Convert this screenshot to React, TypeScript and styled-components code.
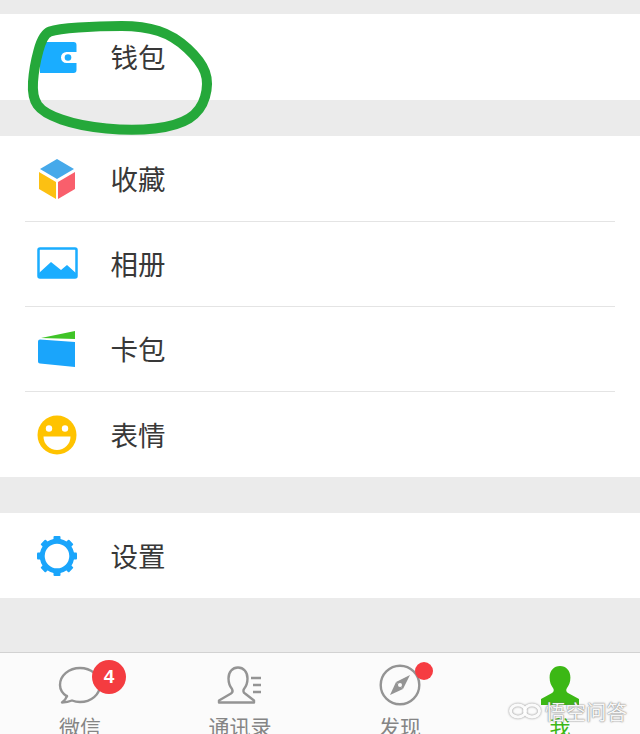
import React from "react";
import styled, { createGlobalStyle } from "styled-components";

const Global = createGlobalStyle`
  html, body { margin: 0; padding: 0; background: #ebebeb; }
  body { font-family: "Liberation Sans", "Noto Sans CJK SC", sans-serif; }
`;

const Page = styled.div`
  position: relative;
  width: 640px;
  height: 734px;
  overflow: hidden;
  background: #ebebeb;
  display: flex;
  flex-direction: column;
  padding-top: 14px;
  box-sizing: border-box;
`;

const Group = styled.section`
  background: #fff;
  margin-bottom: 36px;
`;

const Row = styled.div<{ $h?: number }>`
  height: ${(p) => p.$h ?? 85}px;
  display: flex;
  align-items: center;
  margin: 0 25px;
  box-sizing: border-box;
  & + & { border-top: 1px solid #e4e4e4; }
`;

const IconSlot = styled.div<{ $left: number }>`
  width: 85.500px;
  padding-left: ${(p) => p.$left}px;
  box-sizing: border-box;
  flex: none;
  display: flex;
  align-items: center;
  svg { display: block; }
`;

const Label = styled.span`
  font-family: "Noto Sans CJK SC", sans-serif;
  font-size: 27.5px;
  line-height: 1;
  color: #383838;
`;

const TabBar = styled.nav`
  margin-top: auto;
  height: 82px;
  flex: none;
  box-sizing: border-box;
  background: #fbfbfb;
  border-top: 1px solid #d2d2d2;
  display: grid;
  grid-template-columns: repeat(4, 160px);
`;

const Tab = styled.div`
  position: relative;
  display: flex;
  flex-direction: column;
  align-items: center;
  padding-top: 12px;
`;

const TabIcon = styled.div`
  height: 40px;
  display: flex;
  align-items: center;
  justify-content: center;
`;

const TabLabel = styled.span<{ $active?: boolean }>`
  margin-top: 9px;
  font-family: "Noto Sans CJK SC", sans-serif;
  font-size: 21px;
  line-height: 24px;
  color: ${(p) => (p.$active ? "#3cb815" : "#858585")};
`;

const CountBadge = styled.span`
  position: absolute;
  left: 92px;
  top: 7px;
  width: 34px;
  height: 34px;
  border-radius: 50%;
  background: #f43c40;
  color: #fff;
  font-family: "Liberation Sans", sans-serif;
  font-weight: 700;
  font-size: 19px;
  line-height: 34px;
  text-align: center;
`;

const DotBadge = styled.span`
  position: absolute;
  left: 95px;
  top: 9px;
  width: 18px;
  height: 18px;
  border-radius: 50%;
  background: #f63c42;
`;

const Scribble = styled.svg`
  position: absolute;
  left: 0;
  top: 0;
  pointer-events: none;
`;

const Watermark = styled.div`
  position: absolute;
  left: 509px;
  top: 697px;
  display: flex;
  align-items: center;
  gap: 4px;
  color: rgba(255, 255, 255, 0.95);
  font-family: "Noto Sans CJK SC", sans-serif;
  font-size: 20.5px;
  line-height: 28px;
  text-shadow: 0 0 2px rgba(120, 120, 120, 0.9), 0 0 1px rgba(120, 120, 120, 0.9);
  svg { filter: drop-shadow(0 0 1px rgba(120, 120, 120, 0.9)); }
`;

const scribblePoints: [number, number][] = [
  [43, 34], [34, 67], [32, 97], [43, 113], [80, 126], [133, 131], [177, 126],
  [201, 111], [209, 83], [201, 61], [174, 36], [143, 26], [100, 26], [57, 29],
];

const scribblePath = () => {
  const pts = scribblePoints;
  const mid = (a: [number, number], b: [number, number]) => `${(a[0] + b[0]) / 2} ${(a[1] + b[1]) / 2}`;
  let d = `M${mid(pts[pts.length - 1], pts[0])}`;
  pts.forEach((p, i) => {
    d += ` Q${p[0]} ${p[1]} ${mid(p, pts[(i + 1) % pts.length])}`;
  });
  return d + "Z";
};

const Wallet = () => (
  <svg width="40" height="34" viewBox="0 0 40 34">
    <path d="M0 2h33.500a3 3 0 0 1 3 3v7H26.500a5.500 5.500 0 0 0 0 11h10v7a3 3 0 0 1-3 3H0z" fill="#1aadff" />
    <circle cx="28" cy="17.500" r="3.300" fill="#1aadff" />
  </svg>
);

const Cube = () => (
  <svg width="40" height="42" viewBox="0 0 40 42">
    <path d="M19 1l17 10-17 10L2 11z" fill="#46a9ea" />
    <path d="M1 14l17 10v17L1 31z" fill="#fcc012" />
    <path d="M37 14L20 24v17l17-10z" fill="#f95f6c" />
  </svg>
);

const Photo = () => (
  <svg width="42" height="34" viewBox="0 0 42 34">
    <rect x="1.500" y="1.500" width="38" height="29" rx="1.500" fill="#fff" stroke="#1aadff" strokeWidth="2.500" />
    <path d="M2 26l12-11 10 8 6-5 10 9v4H2z" fill="#1aadff" />
  </svg>
);

const Card = () => (
  <svg width="40" height="38" viewBox="0 0 40 38">
    <path d="M3 8L37 1v8z" fill="#3fc427" />
    <path d="M0 11.500a2 2 0 0 1 2-2L37 12v25L2 33.500a2 2 0 0 1-2-2z" fill="#1aa5fb" />
  </svg>
);

const Smile = () => (
  <svg width="40" height="40" viewBox="0 0 40 40">
    <circle cx="20" cy="20" r="19.500" fill="#ffc300" />
    <circle cx="12" cy="13.500" r="3.200" fill="#fff" />
    <circle cx="28" cy="13.500" r="3.200" fill="#fff" />
    <path d="M6.500 21.500h27a13.500 13.500 0 0 1-27 0z" fill="#fff" />
  </svg>
);

const Gear = () => (
  <svg width="42" height="42" viewBox="0 0 42 42">
    {[0, 45, 90, 135, 180, 225, 270, 315].map((a) => (
      <rect key={a} x="17.500" y="1" width="7" height="7" rx="1" fill="#1aa5fb" transform={`rotate(${a} 21 21)`} />
    ))}
    <circle cx="21" cy="21" r="14.800" fill="#fff" stroke="#1aa5fb" strokeWidth="5" />
  </svg>
);

const Chat = () => (
  <svg width="44" height="40" viewBox="0 0 44 40">
    <path d="M9 31.500C4.500 28.500 2 24.500 2 20 2 10.500 11 3 22 3s20 7.500 20 17-9 17-20 17c-3 0-5.500-.5-8-1.500-3 1.200-6 1.800-10 2 2.500-2 4.200-3.800 5-6.500z" fill="none" stroke="#949494" strokeWidth="2.400" strokeLinejoin="round" />
  </svg>
);

const Contacts = () => (
  <svg width="46" height="40" viewBox="0 0 46 40">
    <path d="M2 37.500v-2l12-7c1.500-1 1.800-3 1-4.500-2-2.500-3.500-6-3.500-10.500C11.500 7 15.500 2.500 21 2.500s9.500 4.500 9.500 11c0 4.500-1.500 8-3.500 10.500-1 1.500-.7 3.500 1 4.500l9 7v2z" fill="none" stroke="#949494" strokeWidth="2.400" strokeLinejoin="round" />
    <path d="M34 13h10M36 20h8M36 27h8" stroke="#949494" strokeWidth="2.400" />
  </svg>
);

const Compass = () => (
  <svg width="42" height="42" viewBox="0 0 42 42">
    <circle cx="21" cy="21" r="19.300" fill="none" stroke="#949494" strokeWidth="2.400" />
    <path d="M31 11L24 25 17 18z" fill="#949494" />
    <path d="M11 31l6-13 7 7z" fill="#949494" />
    <circle cx="21" cy="21" r="2" fill="#fbfbfb" />
  </svg>
);

const Person = () => (
  <svg width="40" height="40" viewBox="0 0 40 40">
    <path d="M1 40v-6l11-6c2-1.200 2.200-3.300 1-5-2-2.800-3.400-6-3.400-10.500C9.600 5.500 14 1 20 1s10.400 4.500 10.400 11.500c0 4.500-1.400 7.700-3.400 10.500-1.200 1.700-1 3.800 1 5l11 6v6z" fill="#3cb815" />
  </svg>
);

export default function App() {
  return (
    <Page>
      <Global />
      <Group>
        <Row $h={86}>
          <IconSlot $left={15}><Wallet /></IconSlot>
          <Label>钱包</Label>
        </Row>
      </Group>
      <Group>
        <Row><IconSlot $left={13}><Cube /></IconSlot><Label>收藏</Label></Row>
        <Row><IconSlot $left={12}><Photo /></IconSlot><Label>相册</Label></Row>
        <Row><IconSlot $left={13}><Card /></IconSlot><Label>卡包</Label></Row>
        <Row $h={86}><IconSlot $left={12}><Smile /></IconSlot><Label>表情</Label></Row>
      </Group>
      <Group>
        <Row><IconSlot $left={11}><Gear /></IconSlot><Label>设置</Label></Row>
      </Group>
      <TabBar>
        <Tab>
          <TabIcon><Chat /></TabIcon>
          <TabLabel>微信</TabLabel>
          <CountBadge>4</CountBadge>
        </Tab>
        <Tab>
          <TabIcon><Contacts /></TabIcon>
          <TabLabel>通讯录</TabLabel>
        </Tab>
        <Tab>
          <TabIcon><Compass /></TabIcon>
          <TabLabel>发现</TabLabel>
          <DotBadge />
        </Tab>
        <Tab>
          <TabIcon><Person /></TabIcon>
          <TabLabel $active>我</TabLabel>
        </Tab>
      </TabBar>
      <Scribble width="640" height="734" viewBox="0 0 640 734">
        <path d={scribblePath()} fill="none" stroke="#25a83a" strokeWidth="10" strokeLinejoin="round" />
      </Scribble>
      <Watermark>
        <svg width="32" height="18" viewBox="0 0 32 18">
          <ellipse cx="9" cy="9" rx="7.500" ry="6" fill="none" stroke="rgba(255,255,255,0.95)" strokeWidth="3" />
          <ellipse cx="23" cy="9" rx="7.500" ry="6" fill="none" stroke="rgba(255,255,255,0.95)" strokeWidth="3" />
        </svg>
        <span>悟空问答</span>
      </Watermark>
    </Page>
  );
}
